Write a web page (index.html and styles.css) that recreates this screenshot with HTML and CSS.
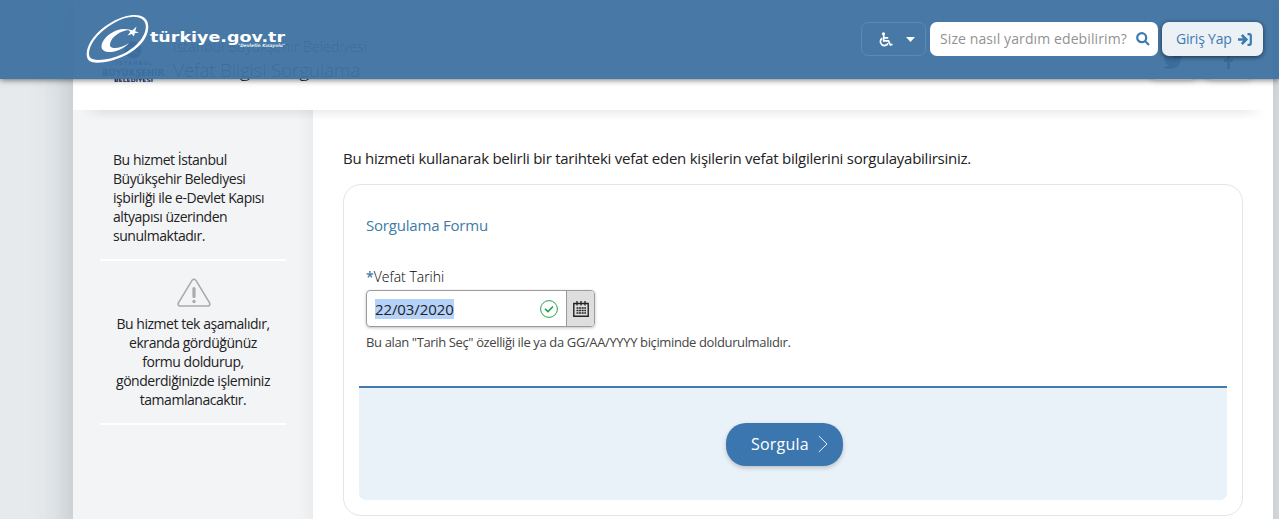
FILE: index.html
```html
<!DOCTYPE html>
<html lang="tr">
<head>
<meta charset="utf-8">
<title>Vefat Bilgisi Sorgulama</title>
<link rel="stylesheet" href="styles.css">
</head>
<body>
<header class="topbar">
  <svg class="logo" width="210" height="60" viewBox="80 8 210 60">
    <path fill="#fff" fill-rule="evenodd" d="M88 59.500C83 49 94 32 112 22C130 12 146 13 148 24C150 37 139 49 124 56C109 63 92 65 88 59.500ZM90 57.500C94 62 110 60 123 54C137 47 147 35 145.700 25C144 15 129 14 114 23C96 33 86 49 90 57.500Z"/>
    <path fill="#fff" d="M130 30C120 26 103 35 101.500 46C101 55 119 54 129 43C120 49 109 50 110 44C111 37 121 30 130 30Z"/>
    <path fill="#fff" d="M136.500 26.500L135.200 31.200L139 32.500L134.700 33.200L134 36.500L131.800 34L127.500 35.500L130.300 32L128 29.500L132.500 30.200Z"/>
    <text class="logo-name" x="150" y="41.500" textLength="135" lengthAdjust="spacingAndGlyphs">türkiye.gov.tr</text>
    <text class="logo-tag" x="238" y="47" textLength="47" lengthAdjust="spacingAndGlyphs">"Devletin Kısayolu"</text>
  </svg>
  <div class="tools">
    <div class="access">
      <svg width="14" height="15" viewBox="0 0 14 15" fill="none" stroke="#fff" stroke-width="1.700"><circle cx="4.500" cy="1.800" r="1.600" fill="#fff" stroke="none"/><path d="M4.700 3V8.800H9.500L11.400 13L13.500 12.200M5 5.900H9.200M3.200 6.200A4 4 0 1 0 9 11.300"/></svg>
      <svg width="9" height="5" viewBox="0 0 9 5"><path d="M0 0H9L4.500 5Z" fill="#fff"/></svg>
    </div>
    <div class="search"><span class="search-hint">Size nasıl yardım edebilirim?</span>
      <svg width="14" height="14" viewBox="0 0 14 14" fill="none" stroke="#3c7ab0" stroke-width="2.200"><circle cx="5.700" cy="5.700" r="4.500"/><path d="M9 9L13 13"/></svg>
    </div>
    <div class="login"><span class="login-text">Giriş Yap</span>
      <svg width="14" height="13" viewBox="0 0 14 13" fill="none" stroke="#3c7ab0" stroke-width="2.600"><path d="M0 6.500H7.500M3.800 2L8.300 6.500L3.800 11"/><path d="M9.500 1.200H11.300Q12.800 1.200 12.800 2.700V10.300Q12.800 11.800 11.300 11.800H9.500" stroke-width="2.200"/></svg>
    </div>
  </div>
</header>
<main class="page">
  <div class="title">
    <svg class="crest" width="66" height="46" viewBox="100 37 66 46">
      <circle cx="133" cy="50" r="8.500" fill="#263673"/>
      <path d="M126 49Q129 45 133 49Q137 45 140 49M127 54Q133 50 139 54" stroke="#fff" fill="none"/>
      <text class="crest-a" x="116" y="65" textLength="36">İSTANBUL</text>
      <text class="crest-b" x="102" y="75.500" textLength="62" lengthAdjust="spacingAndGlyphs">BÜYÜKŞEHİR</text>
      <text class="crest-a" x="114" y="82" textLength="39" lengthAdjust="spacingAndGlyphs">BELEDİYESİ</text>
    </svg>
    <div class="names"><div class="org">İstanbul Büyükşehir Belediyesi</div><div class="service">Vefat Bilgisi Sorgulama</div></div>
    <div class="socials">
      <span class="social"><svg width="20" height="16" viewBox="0 0 20 16"><path fill="#20354a" d="M1 1Q5 5 10 5Q9 0 14 0Q16 0 17 2L20 1L18 4Q18 16 6 16Q2 16 0 14Q4 14 6 12Q3 12 2 9H4Q1 8 1 5L3 5Q0 3 1 1Z"/></svg></span>
      <span class="social"><svg width="10" height="16" viewBox="0 0 10 16"><path fill="#20354a" d="M3 16V9H0V6H3V4Q3 0 7 0H9V3H7Q6 3 6 4.500V6H9L8.500 9H6V16Z"/></svg></span>
    </div>
  </div>
  <div class="columns">
    <aside class="side">
      <p class="partner">Bu hizmet İstanbul<br>Büyükşehir Belediyesi<br>işbirliği ile e-Devlet Kapısı<br>altyapısı üzerinden<br>sunulmaktadır.</p>
      <div class="step">
        <svg class="warn" width="34" height="29" viewBox="0 0 34 29" fill="none" stroke="#a9abad" stroke-width="1.600"><path d="M15.200 2.200Q17 .3 18.800 2.200L32.700 25Q33.500 27.700 31 28H3Q.500 27.700 1.300 25Z"/><path d="M17 10.500V18.500" stroke-width="3.200" stroke-linecap="round"/><circle cx="17" cy="23.500" r="1.700" fill="#a9abad" stroke="none"/></svg>
        <p class="step-text">Bu hizmet tek aşamalıdır,<br>ekranda gördüğünüz<br>formu doldurup,<br>gönderdiğinizde işleminiz<br>tamamlanacaktır.</p>
      </div>
    </aside>
    <section class="content">
      <p class="intro">Bu hizmeti kullanarak belirli bir tarihteki vefat eden kişilerin vefat bilgilerini sorgulayabilirsiniz.</p>
      <div class="form">
        <h2 class="form-title">Sorgulama Formu</h2>
        <div class="label"><span class="star">*</span>Vefat Tarihi</div>
        <div class="field">
          <span class="value">22/03/2020</span>
          <svg class="valid" width="18" height="18" viewBox="0 0 18 18" fill="none" stroke="#25a54a"><circle cx="9" cy="9" r="8.400"/><path d="M5 8.800L8 11.600L13 6.500" stroke-width="1.700"/></svg>
          <span class="picker"><svg width="16" height="16" viewBox="0 0 16 16" fill="none" stroke="#222"><path d="M.8 2.500H15.200V15.200H.8Z" stroke-width="1.400"/><path d="M4 0V4.500M8 0V4.500M12 0V4.500" stroke-width="1.300"/><path d="M3.500 7H13M3.500 9.500H13M3.500 12H13" stroke-width="1.400" stroke-dasharray="2 .6"/></svg></span>
        </div>
        <div class="hint">Bu alan "Tarih Seç" özelliği ile ya da GG/AA/YYYY biçiminde doldurulmalıdır.</div>
        <div class="actions"><button class="submit"><span class="submit-text">Sorgula</span><svg width="10" height="18" viewBox="0 0 10 18" fill="none" stroke="#e4f1fb" stroke-width="1"><path d="M.8 1L9 9L.8 17"/></svg></button></div>
      </div>
    </section>
  </div>
</main>
</body>
</html>
```
FILE: styles.css
```css
* { box-sizing: border-box; }
body { margin: 0; height: 519px; overflow: hidden; background: #e6eaed; font-family: "Open Sans", sans-serif; color: #222; }
p, h2 { margin: 0; }
svg { display: block; flex: none; overflow: visible; }
.topbar { position: absolute; top: 0; left: 0; z-index: 2; width: 100%; height: 79px; padding: 8px 16px 0 80px; display: flex; justify-content: space-between; background: rgba(61, 113, 160, .94); box-shadow: 0 1px 6px rgba(0, 0, 0, .55); }
.logo-name { font: bold 14.5px "DejaVu Sans", sans-serif; fill: #fff; }
.logo-tag { font: italic bold 4.5px "DejaVu Sans", sans-serif; fill: #e3edf5; }
.tools { display: flex; height: 34px; margin-top: 14px; }
.access { width: 65px; padding: 0 10px 0 17px; margin-right: 4px; border: 1px solid #5b8ab3; border-radius: 7px; display: flex; align-items: center; justify-content: space-between; }
.search { width: 228px; padding: 0 8px 0 10px; margin-right: 4px; border-radius: 7px; background: #fff; display: flex; align-items: center; justify-content: space-between; color: #929292; font-size: 14px; letter-spacing: .1px; white-space: nowrap; }
.search-hint { margin-top: -2px; }
.login { width: 101px; padding: 0 11px 0 14px; border-radius: 7px; background: #ecf1f6; box-shadow: 0 1px 5px rgba(0, 0, 0, .6); display: flex; align-items: center; justify-content: space-between; color: #3c7ab0; font-size: 14px; letter-spacing: -.2px; white-space: nowrap; }
.login-text { margin-top: -2px; }
.page { width: 1200px; height: 700px; margin-left: 73px; background: #fff; box-shadow: 0 0 38px rgba(50, 60, 70, .28); }
.title { position: relative; height: 110px; padding: 37px 27px 0; display: flex; }
.title::after { content: ""; position: absolute; left: 8px; right: 8px; bottom: -10px; height: 10px; background: linear-gradient(rgba(0, 0, 0, .065), transparent); -webkit-mask-image: linear-gradient(90deg, transparent, #000 22px, #000 calc(100% - 22px), transparent); mask-image: linear-gradient(90deg, transparent, #000 22px, #000 calc(100% - 22px), transparent); }
.crest-a { font: bold 5px "DejaVu Sans", sans-serif; fill: #263673; }
.crest-b { font: bold 9.5px "DejaVu Sans", sans-serif; fill: #263673; }
.names { margin-left: 7px; font-weight: 300; white-space: nowrap; }
.org { font-size: 14px; line-height: 20px; letter-spacing: .15px; }
.service { font-size: 19px; line-height: 26px; letter-spacing: -.23px; }
.socials { margin-left: auto; margin-right: -7px; display: flex; gap: 8px; }
.social { width: 48px; height: 43px; padding-top: 16px; border-radius: 8px; display: flex; justify-content: center; background: #fff; box-shadow: 0 2px 5px rgba(0, 0, 0, .12); }
.columns { display: flex; height: 590px; }
.side { width: 240px; padding: 40px 27px 0; background: linear-gradient(90deg, #f3f4f6 225px, #ebecee); font-size: 14px; line-height: 19px; letter-spacing: -.46px; white-space: nowrap; }
.partner { height: 111px; padding-left: 13px; border-bottom: 2px solid #fff; }
.step { height: 164px; padding-top: 17px; border-bottom: 2px solid #fff; text-align: center; }
.warn { margin: 0 auto 7px; position: relative; left: 1px; }
.content { width: 960px; padding: 37px 30px 0; }
.intro { font-size: 15px; line-height: 22px; white-space: nowrap; letter-spacing: -.25px; }
.form { height: 332px; margin-top: 15px; padding: 29px 15px 0; border: 1px solid #e5e5e7; border-radius: 18px; }
.form-title { padding-left: 7px; font-size: 15px; line-height: 22px; font-weight: 400; letter-spacing: -.2px; color: #3e7ba9; }
.label { margin: 31px 0 3px 7px; font-size: 14px; line-height: 20px; font-weight: 300; color: #000; }
.star { color: #3e7ba9; font-weight: 600; }
.field { width: 229px; height: 37px; margin-left: 7px; padding-left: 8px; display: flex; align-items: center; border: 1px solid #9c9c9c; border-radius: 4px; box-shadow: 0 1px 3px rgba(0, 0, 0, .25); }
.value { font-size: 15px; line-height: 20px; letter-spacing: -.1px; background: #b5d2fa; }
.valid { margin-left: auto; margin-right: 8px; }
.picker { width: 28px; height: 35px; border-left: 1px solid #999; border-radius: 0 3px 3px 0; background: #dedede; display: flex; align-items: center; justify-content: center; }
.hint { margin: 5px 0 0 7px; font-size: 13px; line-height: 20px; letter-spacing: -.37px; color: #444; white-space: nowrap; }
.actions { height: 114px; margin-top: 34px; padding-right: 17px; border-top: 2px solid #447bae; border-radius: 0 0 7px 7px; background: #e9f1f9; display: flex; align-items: center; justify-content: center; }
.submit { width: 117px; height: 43px; padding: 0 15px 0 25px; border: 0; border-radius: 20px; background: #3b77ae; color: #fff; font: 16px "Open Sans", sans-serif; letter-spacing: .2px; display: flex; align-items: center; justify-content: space-between; box-shadow: 0 2px 4px rgba(60, 50, 50, .25); }
```
